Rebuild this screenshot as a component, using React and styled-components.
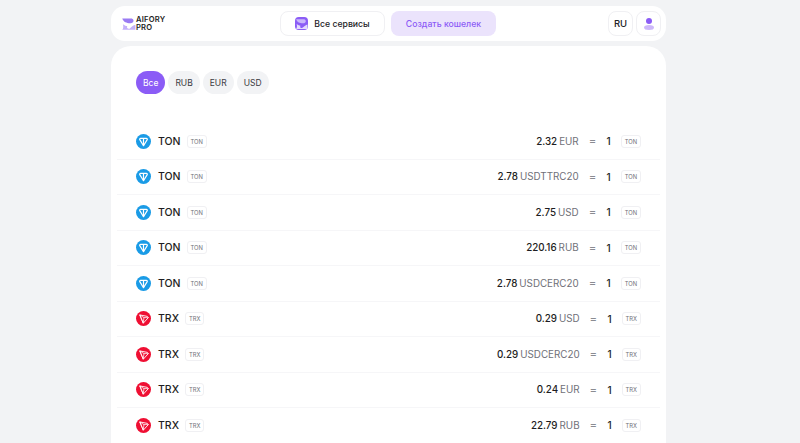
import styled, { createGlobalStyle } from "styled-components";

const rates = [
  { coin: "TON", amount: "2.32", currency: "EUR" },
  { coin: "TON", amount: "2.78", currency: "USDTTRC20" },
  { coin: "TON", amount: "2.75", currency: "USD" },
  { coin: "TON", amount: "220.16", currency: "RUB" },
  { coin: "TON", amount: "2.78", currency: "USDCERC20" },
  { coin: "TRX", amount: "0.29", currency: "USD" },
  { coin: "TRX", amount: "0.29", currency: "USDCERC20" },
  { coin: "TRX", amount: "0.24", currency: "EUR" },
  { coin: "TRX", amount: "22.79", currency: "RUB" },
];

const filters = ["Все", "RUB", "EUR", "USD"];

const TonIcon = () => (
  <svg width="15" height="15" viewBox="0 0 30 30">
    <circle cx="15" cy="15" r="15" fill="#1a9be6" />
    <path
      d="M9.200 8.600h11.600c1.400 0 2.300 1.500 1.600 2.700L15 23.400 7.600 11.300c-.7-1.200.2-2.700 1.600-2.700z"
      fill="none"
      stroke="#fff"
      strokeWidth="2.400"
      strokeLinejoin="round"
    />
    <path d="M15 8.600v14.400" stroke="#fff" strokeWidth="2.400" />
  </svg>
);

const TrxIcon = () => (
  <svg width="15" height="15" viewBox="0 0 30 30">
    <circle cx="15" cy="15" r="15" fill="#ef0f33" />
    <path
      d="M7.500 7.800l15.200 3 2 2.400-10.200 11.200z"
      fill="none"
      stroke="#fff"
      strokeWidth="1.800"
      strokeLinejoin="round"
    />
    <path d="M7.500 7.800l7 16.600 1.400-11.200zM15.900 13.200l8.800 0" fill="none" stroke="#fff" strokeWidth="1.500" />
  </svg>
);

const LogoMark = ({ size, tile }) => (
  <svg width={size} height={size} viewBox="0 0 24 24">
    {tile && <rect width="24" height="24" rx="7" fill="#8b5cf6" />}
    <path
      d="M2 4H16C20 4 21 8 19 10C16 13 10 11 7 10C5 9 3 7 2 4z"
      fill={tile ? "#c9b6fb" : "#9a7bf3"}
    />
    <path
      d="M3 13C6 15 8 16 10 16C8 20 13 22 15 19C17 17 20 15 23 14V22H2C4 20 4 16 3 13z"
      fill={tile ? "#e3d9fd" : "#c4b0fa"}
    />
  </svg>
);

const App = () => {
  return (
    <Page>
      <GlobalStyle />
      <Header>
        <Logo>
          <LogoMark size={15} />
          <LogoText>
            AIFORY
            <br />
            PRO
          </LogoText>
        </Logo>
        <Nav>
          <ServicesButton>
            <LogoMark size={13} tile />
            Все сервисы
          </ServicesButton>
          <CreateButton>Создать кошелек</CreateButton>
        </Nav>
        <HeaderRight>
          <SquareButton>RU</SquareButton>
          <SquareButton>
            <Person>
              <PersonHead />
              <PersonBody />
            </Person>
          </SquareButton>
        </HeaderRight>
      </Header>
      <Card>
        <Filters>
          {filters.map((filter, index) => (
            <Filter key={filter} active={index === 0 ? 1 : 0}>
              {filter}
            </Filter>
          ))}
        </Filters>
        <List>
          {rates.map((rate, index) => (
            <Row key={index}>
              {rate.coin === "TON" ? <TonIcon /> : <TrxIcon />}
              <CoinName>{rate.coin}</CoinName>
              <Tag>{rate.coin}</Tag>
              <Rate>
                <Amount>{rate.amount}</Amount>
                <Currency>{rate.currency}</Currency>
              </Rate>
              <Equals>=</Equals>
              <One>1</One>
              <Tag>{rate.coin}</Tag>
            </Row>
          ))}
        </List>
      </Card>
    </Page>
  );
};

export default App;

const GlobalStyle = createGlobalStyle`
  html, body {
    margin: 0;
    height: 100%;
    overflow: hidden;
    background: #f2f3f5;
    font-family: Inter, "Noto Sans", sans-serif;
  }
`;

const Page = styled.div`
  width: 555px;
  height: 443px;
  margin-left: 111px;
  padding-top: 6px;
  box-sizing: border-box;
  display: flex;
  flex-direction: column;
  gap: 5px;
  overflow: hidden;
`;

const Header = styled.header`
  height: 35px;
  flex-shrink: 0;
  background: #fff;
  border-radius: 14px;
  display: flex;
  align-items: center;
  padding: 0 5px 0 10px;
`;

const Logo = styled.div`
  display: flex;
  align-items: center;
  width: 159px;
  flex-shrink: 0;
`;

const LogoText = styled.div`
  font-size: 7.600px;
  line-height: 8px;
  letter-spacing: 0.2px;
  font-weight: 600;
  color: #1d1d22;
`;

const Nav = styled.div`
  display: flex;
  gap: 6px;
`;

const ServicesButton = styled.div`
  width: 105px;
  height: 25px;
  box-sizing: border-box;
  border: 1px solid #f0f0f3;
  border-radius: 8px;
  display: flex;
  align-items: center;
  justify-content: center;
  gap: 6px;
  font-size: 8.700px;
  font-weight: 500;
  color: #222227;
`;

const CreateButton = styled.div`
  width: 105px;
  height: 25px;
  border-radius: 8px;
  background: #ebe3fc;
  display: flex;
  align-items: center;
  justify-content: center;
  font-size: 8.700px;
  font-weight: 500;
  color: #8b5cf6;
`;

const HeaderRight = styled.div`
  display: flex;
  gap: 3px;
  margin-left: auto;
`;

const SquareButton = styled.div`
  width: 25px;
  height: 25px;
  box-sizing: border-box;
  border: 1px solid #f0f0f3;
  border-radius: 8px;
  display: flex;
  align-items: center;
  justify-content: center;
  font-size: 9.500px;
  font-weight: 500;
  color: #222227;
`;

const Person = styled.div`
  display: flex;
  flex-direction: column;
  align-items: center;
  gap: 1px;
`;

const PersonHead = styled.div`
  width: 6px;
  height: 6px;
  border-radius: 50%;
  background: #8b5cf6;
`;

const PersonBody = styled.div`
  width: 10px;
  height: 5px;
  border-radius: 50%;
  background: #cdb8fa;
`;

const Card = styled.main`
  flex: 1;
  background: #fff;
  border-radius: 20px 20px 0 0;
  padding: 25px 6px 0;
`;

const Filters = styled.div`
  display: flex;
  gap: 3px;
  padding-left: 19px;
  margin-bottom: 30px;
`;

const Filter = styled.div`
  height: 23px;
  padding: 0 7px;
  border-radius: 12px;
  display: flex;
  align-items: center;
  font-size: 8.500px;
  background: ${(props) => (props.active ? "#8b5cf6" : "#f2f3f5")};
  color: ${(props) => (props.active ? "#fff" : "#3b3b42")};
`;

const List = styled.div`
  display: flex;
  flex-direction: column;
`;

const Row = styled.div`
  height: 35.500px;
  box-sizing: border-box;
  flex-shrink: 0;
  display: flex;
  align-items: center;
  padding: 0 19px;
  border-bottom: 1px solid #f6f6f8;
`;

const CoinName = styled.span`
  margin-left: 7px;
  font-size: 10.500px;
  font-weight: 500;
  color: #1d1d22;
`;

const Tag = styled.span`
  margin-left: 6px;
  height: 11px;
  padding: 0 3px;
  border: 1px solid #f0f0f3;
  border-radius: 3px;
  display: flex;
  align-items: center;
  font-size: 5.800px;
  color: #6f7078;
`;

const Rate = styled.div`
  margin-left: auto;
  display: flex;
  align-items: baseline;
  gap: 2px;
  font-size: 9.800px;
`;

const Amount = styled.span`
  font-weight: 500;
  color: #1d1d22;
`;

const Currency = styled.span`
  color: #6f7078;
`;

const Equals = styled.span`
  margin-left: 10px;
  width: 7px;
  font-size: 11.500px;
  color: #8a8b92;
`;

const One = styled.span`
  margin: 0 3px 0 10px;
  width: 6px;
  text-align: center;
  font-size: 10px;
  font-weight: 500;
  color: #1d1d22;
`;
